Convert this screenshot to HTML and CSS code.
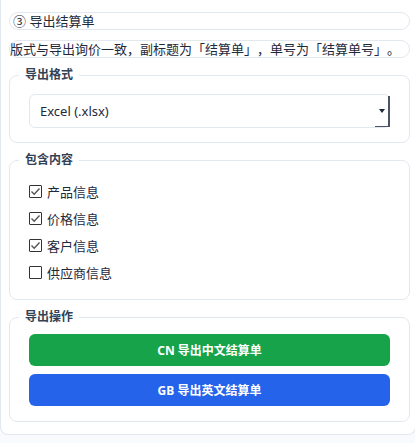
FILE: index.html
```html
<!DOCTYPE html>
<html>
    <head>
        <meta charset="utf-8">
        <link rel="stylesheet" href="styles.css">
    </head>
    <body>
        <div class="card">
            <h3 class="pill title">③ 导出结算单</h3>
            <p class="pill note">版式与导出询价一致，副标题为「结算单」，单号为「结算单号」。</p>

            <fieldset class="group">
                <legend>导出格式</legend>
                <div class="select-wrap">
                    <select class="format">
                        <option>Excel (.xlsx)</option>
                        <option>PDF (.pdf)</option>
                    </select>
                </div>
            </fieldset>

            <fieldset class="group options">
                <legend>包含内容</legend>
                <label class="check"><input type="checkbox" checked> 产品信息</label>
                <label class="check"><input type="checkbox" checked> 价格信息</label>
                <label class="check"><input type="checkbox" checked> 客户信息</label>
                <label class="check"><input type="checkbox"> 供应商信息</label>
            </fieldset>

            <fieldset class="group actions">
                <legend>导出操作</legend>
                <button class="btn btn-cn">CN 导出中文结算单</button>
                <button class="btn btn-en">GB 导出英文结算单</button>
            </fieldset>
        </div>
    </body>
</html>
```

FILE: styles.css
```css
body {
    margin: 0;
    background: #f8fafc;
    font-family: "Noto Sans", "Noto Sans CJK SC", sans-serif;
    color: #1e293b;
    text-spacing-trim: space-all;
}
.card {
    width: 401px;
    padding: 12px 5px 12px 8px;
    background: #fff;
    border: 1px solid #e2e8f0;
    border-top: 0;
    border-radius: 0 0 8px 8px;
}
.pill {
    margin: 0;
    border: 1px solid #e2e8f0;
    border-radius: 10px;
    font-size: 13px;
    font-weight: normal;
    line-height: 16px;
    white-space: nowrap;
}
.title {
    padding-left: 3px;
}
.note {
    margin-top: 10px;
    padding-left: 0;
}
.group {
    margin: 10px 0 0;
    padding: 12px 19px 14px;
    border: 1px solid #e2e8f0;
    border-radius: 8px;
}
.group legend {
    margin-left: -10px;
    padding: 0 6px;
    font-size: 12px;
    font-weight: bold;
    line-height: 14px;
    color: #334155;
}
.select-wrap {
    position: relative;
}
.format {
    display: block;
    width: 100%;
    height: 34px;
    padding: 0 10px;
    border: 1px solid #e2e8f0;
    border-radius: 6px;
    background: #fff;
    font-family: inherit;
    font-size: 13px;
    color: #1e293b;
    appearance: none;
    -webkit-appearance: none;
}
.select-wrap::after {
    content: "";
    position: absolute;
    right: 0;
    bottom: 1px;
    width: 13px;
    height: 30px;
    border-right: 2px solid #4b5563;
    border-bottom: 1px solid #4b5563;
    pointer-events: none;
}
.select-wrap::before {
    content: "";
    position: absolute;
    right: 5px;
    top: 15px;
    border-left: 3.5px solid transparent;
    border-right: 3.5px solid transparent;
    border-top: 4px solid #1f2937;
    pointer-events: none;
}
.options {
    padding-bottom: 13px;
}
.check {
    display: flex;
    align-items: center;
    gap: 5px;
    height: 27px;
    font-size: 13px;
}
.group .check:first-of-type {
    margin-top: -1px;
}
.check input {
    appearance: none;
    -webkit-appearance: none;
    margin: 0;
    width: 13px;
    height: 13px;
    border: 1px solid #333;
    border-radius: 1px;
    background: #fff center / 11px 11px no-repeat;
}
.check input:checked {
    background-image: url("data:image/svg+xml,%3Csvg xmlns='http://www.w3.org/2000/svg' viewBox='0 0 11 11'%3E%3Cpath d='M1.5 5.5l2.7 2.7 5.3-5.6' fill='none' stroke='%23555' stroke-width='1.4'/%3E%3C/svg%3E");
}
.actions {
    display: flex;
    flex-direction: column;
    gap: 8px;
    padding-top: 10px;
    padding-bottom: 15px;
}
.btn {
    height: 32px;
    border: 0;
    border-radius: 6px;
    font-family: inherit;
    font-size: 12px;
    font-weight: bold;
    color: #fff;
}
.btn-cn {
    background: #16a34a;
}
.btn-en {
    background: #2563eb;
}
```
